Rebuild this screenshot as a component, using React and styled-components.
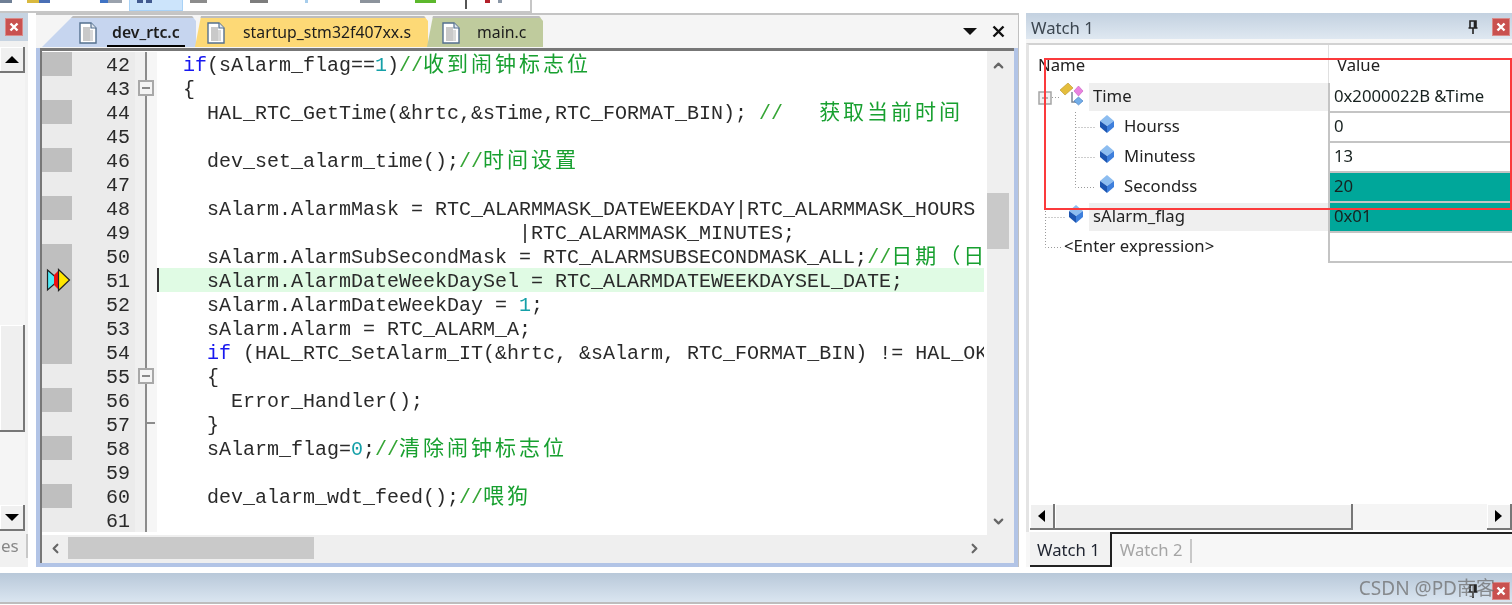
import styled, { createGlobalStyle } from "styled-components";
import { ChevronUp, ChevronDown, ChevronLeft, ChevronRight } from "lucide-react";

const GlobalStyle = createGlobalStyle`
  html, body {
    margin: 0;
    padding: 0;
    background: #fff;
    overflow: hidden;
  }
  * {
    box-sizing: border-box;
  }
`;

const UI_FONT = `"Noto Sans", "Noto Sans CJK SC", sans-serif`;

// the toolbar is cut off by the crop, only the feet of its icons show
const toolBits = [
  { gap: 0, w: 12, color: "#6f7f95" },
  { gap: 15, w: 12, color: "#d9b93e" },
  { gap: 0, w: 11, color: "#4a6fb5" },
  { gap: 50, w: 8, color: "#3f73c4" },
  { gap: 0, w: 14, color: "#9aa2ad" },
];
const toolBitsRight = [
  { gap: 7, w: 17, color: "#8c8c8c" },
  { gap: 43, w: 18, color: "#7d7d7d" },
  { gap: 37, w: 3, color: "#a7cdec" },
  { gap: 52, w: 20, color: "#8c939c" },
  { gap: 35, w: 21, color: "#5cb82c" },
];

const rows = [
  { n: 42, mark: true, code: [["  "], ["if", "kw"], ["(sAlarm_flag=="], ["1", "num"], [")"], ["//", "cm"], ["收到闹钟标志位", "cn"]] },
  { n: 43, fold: "box", code: [["  {"]] },
  { n: 44, mark: true, code: [["    HAL_RTC_GetTime(&hrtc,&sTime,RTC_FORMAT_BIN); "], ["//   ", "cm"], ["获取当前时间", "cn"]] },
  { n: 45, code: [] },
  { n: 46, mark: true, code: [["    dev_set_alarm_time();"], ["//", "cm"], ["时间设置", "cn"]] },
  { n: 47, code: [] },
  { n: 48, mark: true, code: [["    sAlarm.AlarmMask = RTC_ALARMMASK_DATEWEEKDAY|RTC_ALARMMASK_HOURS"]] },
  { n: 49, code: [["                              |RTC_ALARMMASK_MINUTES;"]] },
  { n: 50, mark: true, code: [["    sAlarm.AlarmSubSecondMask = RTC_ALARMSUBSECONDMASK_ALL;"], ["//", "cm"], ["日期（日", "cn"]] },
  { n: 51, mark: true, current: true, code: [["    sAlarm.AlarmDateWeekDaySel = RTC_ALARMDATEWEEKDAYSEL_DATE;"]] },
  { n: 52, mark: true, code: [["    sAlarm.AlarmDateWeekDay = "], ["1", "num"], [";"]] },
  { n: 53, mark: true, code: [["    sAlarm.Alarm = RTC_ALARM_A;"]] },
  { n: 54, mark: true, code: [["    "], ["if", "kw"], [" (HAL_RTC_SetAlarm_IT(&hrtc, &sAlarm, RTC_FORMAT_BIN) != HAL_OK"]] },
  { n: 55, fold: "box", code: [["    {"]] },
  { n: 56, mark: true, code: [["      Error_Handler();"]] },
  { n: 57, fold: "tick", code: [["    }"]] },
  { n: 58, mark: true, code: [["    sAlarm_flag="], ["0", "num"], [";"], ["//", "cm"], ["清除闹钟标志位", "cn"]] },
  { n: 59, code: [] },
  { n: 60, mark: true, code: [["    dev_alarm_wdt_feed();"], ["//", "cm"], ["喂狗", "cn"]] },
  { n: 61, code: [] },
];

const tabs = [
  { name: "dev_rtc.c", color: "#c6d5ef", width: 154, slant: 31, pad: 37, textGap: 16, active: true },
  { name: "startup_stm32f407xx.s", color: "#fdd976", width: 233, slant: 6, pad: 12, textGap: 18 },
  { name: "main.c", color: "#bfcb9d", width: 116, slant: 6, pad: 15, textGap: 17 },
];

const watchRows = [
  { name: "Time", value: "0x2000022B &Time", icon: "struct", indent: 34, hl: true },
  { name: "Hourss", value: "0", icon: "member", indent: 74 },
  { name: "Minutess", value: "13", icon: "member", indent: 74 },
  { name: "Secondss", value: "20", icon: "member", indent: 74, changed: true },
  { name: "sAlarm_flag", value: "0x01", icon: "member", indent: 43, hl: true, changed: true },
  { name: "<Enter expression>", value: "", indent: 34 },
];

function CloseButton() {
  return (
    <RedClose>
      <svg width="10" height="10" viewBox="0 0 10 10">
        <path d="M1.5 1.5 8.5 8.5M8.5 1.5 1.5 8.5" stroke="#fff" strokeWidth="2.4" />
      </svg>
    </RedClose>
  );
}

function PinIcon() {
  return (
    <svg width="12" height="14" viewBox="0 0 12 14">
      <path d="M3 1h6v7H3zM1.5 8h9M6 8v6M7.5 1v7" fill="none" stroke="#222" strokeWidth="1.6" />
    </svg>
  );
}

function FileIcon() {
  return (
    <svg width="18" height="22" viewBox="0 0 18 22">
      <path d="M1 1h11l5 5v15H1z" fill="#fff" stroke="#54708f" strokeWidth="1.4" />
      <path d="M12 1v5h5" fill="#dfe6ee" stroke="#54708f" strokeWidth="1.2" />
      <rect x="4" y="5" width="7" height="14" fill="#c9c9c9" />
      <rect x="11" y="8" width="3" height="11" fill="#d8d8d8" />
    </svg>
  );
}

function MemberIcon() {
  return (
    <svg width="14" height="18" viewBox="0 0 14 18">
      <path d="M7 0 14 6 7 11 0 6z" fill="#8dbdf0" />
      <path d="M0 6 7 11V18L0 12z" fill="#1d55b0" />
      <path d="M14 6 7 11V18L14 12z" fill="#3d7fdc" />
    </svg>
  );
}

function StructIcon() {
  return (
    <StructWrap width="24" height="23" viewBox="0 0 24 23">
      <path d="M12 9v10h5" fill="none" stroke="#7a8594" strokeWidth="1.5" />
      <path d="M0 7 8 0 13 5 5 12z" fill="#e4bd3c" stroke="#b8922a" strokeWidth=".6" />
      <path d="M14 8 18.5 3 23 8 18.5 13z" fill="#ea82e0" stroke="#c55bc0" strokeWidth=".6" />
      <path d="M14 18 18.5 14 23 18 18.5 22z" fill="#74aee8" stroke="#3b77c0" strokeWidth=".6" />
    </StructWrap>
  );
}

function ArrowMarker() {
  return (
    <Marker width="25" height="24" viewBox="0 0 25 24">
      <path d="M1.5 2 13 12 1.5 22z" fill="#4fe9f5" stroke="#222" strokeWidth="1.2" />
      <path d="M8 7 13 2v20L8 17z" fill="#f01010" />
      <path d="M12.5 1.5 23.5 12 12.5 22.5z" fill="#ffe600" stroke="#222" strokeWidth="1.2" />
    </Marker>
  );
}

export default function App() {
  return (
    <>
      <GlobalStyle />
      <Page>
        <Toolbar>
          <ToolIcons>
            {toolBits.map((b, i) => (
              <ToolBit key={i} $gap={b.gap} $w={b.w} $color={b.color} />
            ))}
            <ActiveTool>
              <ToolBit $gap={7} $w={6} $color="#41598f" />
              <ToolBit $gap={3} $w={6} $color="#41598f" />
            </ActiveTool>
            {toolBitsRight.map((b, i) => (
              <ToolBit key={i} $gap={b.gap} $w={b.w} $color={b.color} />
            ))}
            <ToolSep />
            <ToolBit $gap={18} $w={5} $color="#b3202a" />
            <ToolBit $gap={8} $w={4} $color="#8b97a6" />
          </ToolIcons>
        </Toolbar>

        <Main>
          <SidePanel>
            <SideTitle>
              <CloseButton />
            </SideTitle>
            <SideScroll>
              <ScrollButton $dir="up" $h={26} />
              <SideThumbTrack>
                <SideThumb />
              </SideThumbTrack>
              <ScrollButton $dir="down" $h={26} />
            </SideScroll>
            <SideTabs>
              <SideTabText>es</SideTabText>
            </SideTabs>
          </SidePanel>

          <Editor>
            <TabStrip>
              {tabs.map((t) => (
                <Tab key={t.name} $color={t.color} $width={t.width} $slant={t.slant} $pad={t.pad}>
                  <FileIcon />
                  <TabName $gap={t.textGap} $active={t.active}>
                    {t.name}
                  </TabName>
                </Tab>
              ))}
              <TabControls>
                <DropArrow />
                <svg width="13" height="13" viewBox="0 0 13 13">
                  <path d="M1.5 1.5 11.5 11.5M11.5 1.5 1.5 11.5" stroke="#111" strokeWidth="2.4" />
                </svg>
              </TabControls>
            </TabStrip>

            <CodeFrame>
              <CodeBody>
                <CodeLines>
                  {rows.map((r) => (
                    <CodeRow key={r.n}>
                      <Mark $on={r.mark}>{r.current && <ArrowMarker />}</Mark>
                      <LineNum>{r.n}</LineNum>
                      <Fold>
                        {r.fold === "box" && <FoldBox />}
                        {r.fold === "tick" && <FoldTick />}
                      </Fold>
                      <CodeText $current={r.current}>
                        {r.code.map(([text, kind], i) => (
                          <Token key={i} $kind={kind}>
                            {text}
                          </Token>
                        ))}
                      </CodeText>
                    </CodeRow>
                  ))}
                </CodeLines>
                <VScroll>
                  <ChevronUp size={15} strokeWidth={3.5} color="#666" />
                  <VThumb />
                  <ChevronDown size={15} strokeWidth={3.5} color="#666" />
                </VScroll>
              </CodeBody>
              <HScroll>
                <ChevronLeft size={15} strokeWidth={3.5} color="#666" />
                <HThumb />
                <ChevronRight size={15} strokeWidth={3.5} color="#666" />
              </HScroll>
            </CodeFrame>
          </Editor>

          <WatchPanel>
            <WatchTitle>
              <span>Watch 1</span>
              <TitleButtons>
                <PinIcon />
                <CloseButton />
              </TitleButtons>
            </WatchTitle>
            <WatchBody>
              <WatchHead>
                <HeadName>Name</HeadName>
                <HeadValue>Value</HeadValue>
              </WatchHead>
              <WatchTree>
                <TreeLines width="120" height="180" viewBox="0 0 120 180">
                  <g stroke="#9a9a9a" strokeDasharray="1 2" fill="none">
                    <path d="M19.5 20V164.5H37M19.5 134.5H39M26 14.5H34" />
                    <path d="M49.5 29V104.5H69M49.5 44.5H69M49.5 74.5H69" />
                  </g>
                  <rect x="13" y="9" width="12" height="12" fill="#f2f2f2" stroke="#a5a5a5" strokeWidth="1.5" />
                  <path d="M16 15h6" stroke="#777" />
                </TreeLines>
                {watchRows.map((w) => (
                  <WatchRow key={w.name}>
                    <NameCell $indent={w.indent}>
                      {w.icon === "struct" && <StructIcon />}
                      {w.icon === "member" && (
                        <IconLift>
                          <MemberIcon />
                        </IconLift>
                      )}
                      <NameLabel $hl={w.hl} $icon={w.icon}>
                        {w.name}
                      </NameLabel>
                    </NameCell>
                    <ValueCell $changed={w.changed}>{w.value}</ValueCell>
                  </WatchRow>
                ))}
              </WatchTree>
              <WatchScroll>
                <ScrollButton $dir="left" $w={25} />
                <WatchThumb />
                <WatchTrack />
                <ScrollButton $dir="right" $w={25} />
              </WatchScroll>
            </WatchBody>
            <WatchTabs>
              <WatchTab $active>Watch 1</WatchTab>
              <WatchTab>Watch 2</WatchTab>
            </WatchTabs>
            <Highlight />
          </WatchPanel>
        </Main>

        <StatusBar>
          <Watermark>CSDN @PD南客</Watermark>
          <StatusClose>
            <PinIcon />
            <CloseButton />
          </StatusClose>
        </StatusBar>
      </Page>
    </>
  );
}

const Page = styled.div`
  width: 1512px;
  height: 605px;
  display: flex;
  flex-direction: column;
  background: #fff;
  font-family: ${UI_FONT};
  overflow: hidden;
  filter: blur(0.5px);
`;

const Toolbar = styled.div`
  height: 13px;
  width: 532px;
  flex: none;
  background: #fff;
  border-right: 2px solid #c6c6c6;
  border-bottom: 2px solid #c6c6c6;
  overflow: hidden;
`;
const ToolIcons = styled.div`
  display: flex;
  align-items: flex-start;
  height: 11px;
`;
const ToolBit = styled.i`
  display: block;
  flex: none;
  height: 3px;
  width: ${(p) => p.$w}px;
  margin-left: ${(p) => p.$gap}px;
  background: ${(p) => p.$color};
`;
const ActiveTool = styled.div`
  display: flex;
  flex: none;
  width: 54px;
  height: 11px;
  margin-left: 7px;
  background: #cce4fb;
  border: 1px solid #a9d2f6;
  border-top: 0;
`;
const ToolSep = styled.i`
  flex: none;
  width: 2px;
  height: 9px;
  margin-left: 29px;
  background: #555;
`;

const Main = styled.div`
  display: flex;
  height: 554px;
  flex: none;
`;

const SidePanel = styled.div`
  width: 28px;
  margin-right: 8px;
  flex: none;
  display: flex;
  flex-direction: column;
  background: #f1f1f1;
`;
const SideTitle = styled.div`
  height: 28px;
  padding: 5px 0 0 5px;
  background: #c6d3e1;
`;
const SideScroll = styled.div`
  margin-top: 6px;
  width: 25px;
  height: 484px;
  display: flex;
  flex-direction: column;
`;
const SideThumbTrack = styled.div`
  flex: 1;
  display: flex;
  align-items: flex-end;
  padding-bottom: 73px;
  background: #f5f5f5;
`;
const SideThumb = styled.div`
  width: 100%;
  height: 107px;
  background: #efefef;
  border-right: 2px solid #777;
  border-bottom: 2px solid #777;
  box-shadow: inset 1px 1px 0 #fff;
`;
const SideTabs = styled.div`
  height: 30px;
  display: flex;
  align-items: center;
  justify-content: flex-end;
`;
const SideTabText = styled.span`
  font-size: 17px;
  color: #888;
  width: 27px;
  border-right: 2px solid #c8c8c8;
  line-height: 24px;
  padding-right: 8px;
  text-align: right;
`;

const ScrollButton = styled.div`
  flex: none;
  position: relative;
  width: ${(p) => (p.$w ? `${p.$w}px` : "100%")};
  height: ${(p) => (p.$h ? `${p.$h}px` : "100%")};
  background: #f0f0f0;
  border-right: 2px solid #777;
  border-bottom: 2px solid #777;
  box-shadow: inset 1px 1px 0 #fff;
  display: flex;
  align-items: center;
  justify-content: center;

  &::after {
    content: "";
    width: 0;
    height: 0;
    border-style: solid;
    border-color: transparent;
    ${(p) => p.$dir === "up" && "border-width: 0 7px 7px; border-bottom-color: #000;"}
    ${(p) => p.$dir === "down" && "border-width: 7px 7px 0; border-top-color: #000;"}
    ${(p) => p.$dir === "left" && "border-width: 6px 7px 6px 0; border-right-color: #000;"}
    ${(p) => p.$dir === "right" && "border-width: 6px 0 6px 7px; border-left-color: #000;"}
  }
`;

const RedClose = styled.div`
  width: 18px;
  height: 18px;
  background: #c9514f;
  border: 1px solid #d98a88;
  display: flex;
  align-items: center;
  justify-content: center;
  flex: none;
`;

const Editor = styled.div`
  width: 983px;
  flex: none;
  display: flex;
  flex-direction: column;
  background: #f5f5f5;
  border-top: 2px solid #c4c4c4;
  border-right: 1px solid #c0c0c0;
`;
const TabStrip = styled.div`
  height: 33px;
  flex: none;
  display: flex;
  align-items: flex-end;
  padding: 0 0 1px 6px;
`;
const Tab = styled.div`
  height: 31px;
  flex: none;
  width: ${(p) => p.$width}px;
  margin-right: -1px;
  padding-left: ${(p) => p.$pad}px;
  display: flex;
  align-items: center;
  background: ${(p) => p.$color};
  border-top: 2px solid #bdbdbd;
  clip-path: polygon(${(p) => p.$slant}px 0, calc(100% - 4px) 0, 100% 5px, 100% 100%, 0 100%);
`;
const TabName = styled.span`
  font-size: 15.8px;
  line-height: 25px;
  margin-left: ${(p) => p.$gap}px;
  color: #1c1c1c;
  font-weight: ${(p) => (p.$active ? 600 : 400)};
  ${(p) => p.$active && "box-shadow: 0 3px 0 #000; padding: 0 5px; margin-right: -5px; margin-left: 10px;"}
`;
const TabControls = styled.div`
  margin-left: auto;
  align-self: center;
  display: flex;
  align-items: center;
  gap: 15px;
  padding: 0 13px 0 0;
`;
const DropArrow = styled.i`
  display: block;
  width: 0;
  height: 0;
  border-style: solid;
  border-width: 7px 7px 0;
  border-color: #111 transparent transparent;
`;

const CodeFrame = styled.div`
  flex: 1;
  min-height: 0;
  display: flex;
  flex-direction: column;
  background: #fff;
  border-left: 4px solid #b2c4e6;
  border-right: 4px solid #b2c4e6;
  border-bottom: 4px solid #b2c4e6;
  box-shadow: inset 2px 3px 0 #777;
  padding: 3px 0 0 2px;
`;
const CodeBody = styled.div`
  height: 484px;
  flex: none;
  display: flex;
`;
const CodeLines = styled.div`
  width: 945px;
  flex: none;
  padding-top: 1px;
`;
const CodeRow = styled.div`
  height: 24px;
  display: flex;
  font-family: "Liberation Mono", "Noto Sans CJK SC", monospace;
  font-size: 20px;
  line-height: 20px;
  color: #2a2a2a;
`;
const Mark = styled.div`
  position: relative;
  width: 30px;
  flex: none;
  background: ${(p) => (p.$on ? "#bfbfbf" : "#ebebeb")};
`;
const Marker = styled.svg`
  position: absolute;
  left: 4px;
  top: 0;
`;
const LineNum = styled.div`
  width: 63px;
  flex: none;
  padding: 4px 5px 0 0;
  text-align: right;
  background: #ebebeb;
`;
const Fold = styled.div`
  position: relative;
  width: 22px;
  flex: none;
  background: linear-gradient(#8c8c8c, #8c8c8c) 10px 0 / 2px 100% no-repeat,
    linear-gradient(90deg, #f0f0f0 0 11px, #f6f6f6 11px);
`;
const FoldBox = styled.i`
  position: absolute;
  left: 3px;
  top: 4px;
  width: 16px;
  height: 16px;
  background: #f4f4f4;
  border: 2px solid #a8a8a8;

  &::after {
    content: "";
    position: absolute;
    left: 2px;
    right: 2px;
    top: 5px;
    height: 2px;
    background: #888;
  }
`;
const FoldTick = styled.i`
  position: absolute;
  left: 11px;
  top: 10px;
  width: 9px;
  height: 2px;
  background: #8c8c8c;
`;
const CodeText = styled.div`
  flex: 1;
  min-width: 0;
  margin-right: 3px;
  padding: 4px 0 0 2px;
  white-space: pre;
  overflow-x: clip;
  overflow-y: visible;
  ${(p) => p.$current && "background: #e0fbe4; box-shadow: inset 2px 0 0 #333;"}
`;
const tokenColors = { kw: "#1818f0", num: "#15a0a8", cm: "#35a535", cn: "#18a030" };
const Token = styled.span`
  color: ${(p) => tokenColors[p.$kind] || "inherit"};
  ${(p) =>
    p.$kind === "cn" &&
    `
    font-family: "Noto Sans CJK SC", sans-serif;
    font-size: 21px;
    line-height: 0;
    letter-spacing: 3px;
    font-weight: 400;
  `}
`;

const VScroll = styled.div`
  width: 27px;
  flex: none;
  padding: 7px 4px 6px 0;
  background: #efefef;
  display: flex;
  flex-direction: column;
  align-items: center;
  position: relative;

  & > svg {
    flex: none;
  }
`;
const VThumb = styled.div`
  width: 22px;
  height: 56px;
  flex: none;
  margin: 120px auto auto 0;
  background: #c9c9c9;
`;
const HScroll = styled.div`
  flex: 1;
  display: flex;
  align-items: center;
  padding: 0 32px 2px 6px;
  background: #efefef;

  & > svg {
    flex: none;
  }
`;
const HThumb = styled.div`
  width: 246px;
  height: 22px;
  margin: 0 auto 0 5px;
  background: #c9c9c9;
`;

const WatchPanel = styled.div`
  position: relative;
  width: 486px;
  margin-left: 7px;
  flex: none;
  display: flex;
  flex-direction: column;
  background: #f7f7f7;
`;
const WatchTitle = styled.div`
  height: 26px;
  flex: none;
  display: flex;
  align-items: center;
  justify-content: space-between;
  padding: 2px 2px 0 5px;
  font-size: 16.7px;
  color: #3c4650;
  background: linear-gradient(#c3d1e0, #dfe8f1);
`;
const TitleButtons = styled.div`
  display: flex;
  align-items: center;
  gap: 13px;
`;
const WatchBody = styled.div`
  margin-top: 4px;
  height: 489px;
  flex: none;
  display: flex;
  flex-direction: column;
  background: #fff;
  border-top: 2px solid #d2d2d2;
  border-left: 3px solid #e4e4e4;
`;
const WatchHead = styled.div`
  display: grid;
  grid-template-columns: 299px 1fr;
  height: 38px;
  flex: none;
  font-size: 16.7px;
  line-height: 40px;
  color: #222;
`;
const HeadName = styled.div`
  padding-left: 9px;
`;
const HeadValue = styled.div`
  padding-left: 8px;
  border-left: 1px solid #e0e0e0;
`;
const WatchTree = styled.div`
  position: relative;
  flex: 1;
  min-height: 0;
  margin-left: -3px;
`;
const TreeLines = styled.svg`
  position: absolute;
  left: 0;
  top: 0;
  pointer-events: none;
`;
const WatchRow = styled.div`
  display: grid;
  grid-template-columns: 302px 1fr;
  height: 30px;
  font-size: 16.7px;
  color: #222;
`;
const NameCell = styled.div`
  display: flex;
  align-items: center;
  padding-left: ${(p) => p.$indent}px;
  position: relative;
`;
const StructWrap = styled.svg`
  flex: none;
  margin-top: -7px;
`;
const IconLift = styled.span`
  display: flex;
  margin-top: -9px;
`;
const NameLabel = styled.div`
  flex: 1;
  align-self: stretch;
  line-height: 26px;
  margin-bottom: 2px;
  margin-left: ${(p) => (p.$icon === "struct" ? 5 : p.$icon ? 6 : 0)}px;
  padding-left: 4px;
  background: ${(p) => (p.$hl ? "#efefef" : "transparent")};
`;
const ValueCell = styled.div`
  padding-left: 4px;
  line-height: 26px;
  border-left: 2px solid #c4c4c4;
  border-bottom: 2px solid #c4c4c4;
  background: ${(p) => (p.$changed ? "#00a79a" : "#fff")};
  color: #17211f;
`;
const WatchScroll = styled.div`
  height: 26px;
  flex: none;
  display: flex;
  padding-left: 1px;
  margin-bottom: 2px;
`;
const WatchThumb = styled.div`
  width: 298px;
  flex: none;
  background: #efefef;
  border-right: 2px solid #777;
  border-bottom: 2px solid #777;
  box-shadow: inset 1px 1px 0 #fff;
`;
const WatchTrack = styled.div`
  flex: 1;
  background: #f5f5f5;
`;
const WatchTabs = styled.div`
  flex: 1;
  display: flex;
  align-items: flex-start;
  margin-left: 4px;
  border-top: 2px solid #222;
`;
const WatchTab = styled.div`
  font-size: 16.7px;
  height: ${(p) => (p.$active ? "35px" : "24px")};
  line-height: ${(p) => (p.$active ? "31px" : "22px")};
  margin-top: ${(p) => (p.$active ? "-2px" : "5px")};
  padding: ${(p) => (p.$active ? "2px 10px 0 7px" : "0 7px 0 8px")};
  color: ${(p) => (p.$active ? "#1f2430" : "#a5a5a5")};
  background: ${(p) => (p.$active ? "#f2f2f2" : "transparent")};
  border-right: ${(p) => (p.$active ? "2px solid #222" : "2px solid #c8c8c8")};
  border-bottom: ${(p) => (p.$active ? "2px solid #222" : "0")};
`;
const Highlight = styled.div`
  position: absolute;
  left: 18px;
  top: 45px;
  width: 468px;
  height: 152px;
  border: 2px solid #fb3a3c;
  pointer-events: none;
`;

const StatusBar = styled.div`
  position: relative;
  height: 31px;
  margin-top: 6px;
  flex: none;
  display: flex;
  align-items: center;
  justify-content: flex-end;
  padding: 0 2px 0 0;
  background: linear-gradient(#b8c8d9, #dae5f0);
  border-bottom: 2px solid #bdbdbd;
`;
const Watermark = styled.div`
  position: absolute;
  right: 17px;
  top: 1px;
  font-size: 19px;
  line-height: 28px;
  color: rgba(110, 110, 110, 0.75);
  z-index: 1;
`;
const StatusClose = styled.div`
  margin-top: 6px;
  display: flex;
  align-items: center;
  gap: 13px;
`;
